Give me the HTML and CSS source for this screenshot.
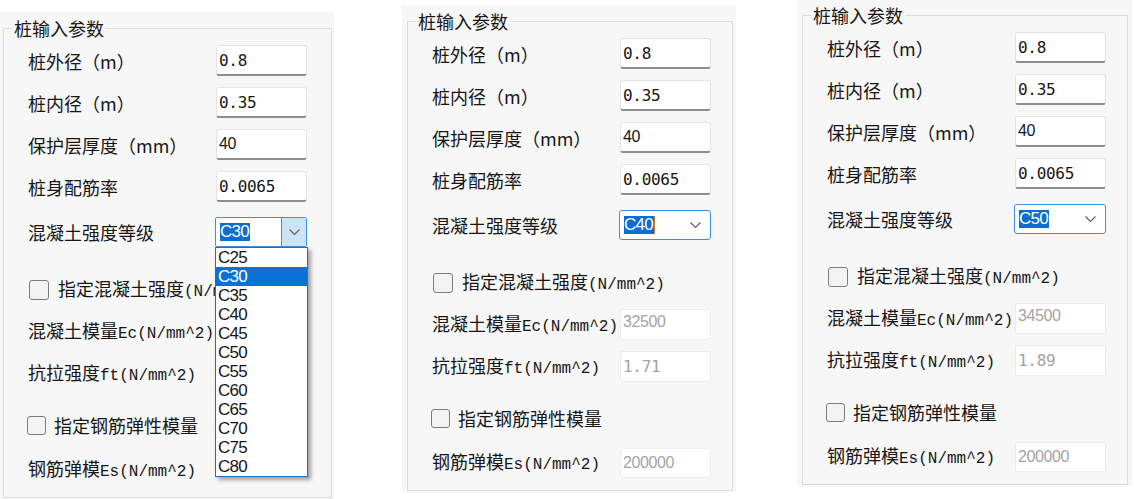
FILE: index.html
```html
<!DOCTYPE html>
<html lang="zh">
<head>
<meta charset="utf-8">
<title>桩输入参数</title>
<link rel="stylesheet" href="styles.css">
</head>
<body>
<div class="stage">

  <section class="panel panel-a">
    <fieldset class="group">
      <legend class="group-title">桩输入参数</legend>
      <div class="rows">
        <div class="row"><span class="lbl">桩外径（m）</span><span class="field"><span class="val">0.8</span></span></div>
        <div class="row"><span class="lbl">桩内径（m）</span><span class="field"><span class="val">0.35</span></span></div>
        <div class="row"><span class="lbl">保护层厚度（mm）</span><span class="field"><span class="val sans">40</span></span></div>
        <div class="row"><span class="lbl">桩身配筋率</span><span class="field"><span class="val">0.0065</span></span></div>
        <div class="row row-combo">
          <span class="lbl">混凝土强度等级</span>
          <div class="combo combo-open">
            <span class="combo-text"><span class="sel">C30</span></span>
            <span class="combo-btn"><svg class="chev" width="11" height="6" viewBox="0 0 11 6"><polyline points="0.5,0.5 5.5,5.5 10.5,0.5"/></svg></span>
            <ul class="dropdown">
              <li>C25</li><li class="hl">C30</li><li>C35</li><li>C40</li><li>C45</li><li>C50</li>
              <li>C55</li><li>C60</li><li>C65</li><li>C70</li><li>C75</li><li>C80</li>
            </ul>
          </div>
        </div>
        <div class="row row-check"><span class="check"></span><span class="clbl">指定混凝土强度<span class="en">(N/mm^2)</span></span></div>
        <div class="row row-ec"><span class="lbl">混凝土模量<span class="en">Ec(N/mm^2)</span></span><span class="field off covered"><span class="val sans dim">32500</span></span></div>
        <div class="row row-ft"><span class="lbl">抗拉强度<span class="en">ft(N/mm^2)</span></span><span class="field off covered"><span class="val dim">1.71</span></span></div>
        <div class="row row-check2"><span class="check"></span><span class="clbl">指定钢筋弹性模量</span></div>
        <div class="row row-es"><span class="lbl">钢筋弹模<span class="en">Es(N/mm^2)</span></span><span class="field off covered"><span class="val sans dim">200000</span></span></div>
      </div>
    </fieldset>
  </section>

  <section class="panel panel-b">
    <fieldset class="group">
      <legend class="group-title">桩输入参数</legend>
      <div class="rows">
        <div class="row"><span class="lbl">桩外径（m）</span><span class="field"><span class="val">0.8</span></span></div>
        <div class="row"><span class="lbl">桩内径（m）</span><span class="field"><span class="val">0.35</span></span></div>
        <div class="row"><span class="lbl">保护层厚度（mm）</span><span class="field"><span class="val sans">40</span></span></div>
        <div class="row"><span class="lbl">桩身配筋率</span><span class="field"><span class="val">0.0065</span></span></div>
        <div class="row row-combo">
          <span class="lbl">混凝土强度等级</span>
          <div class="combo">
            <span class="combo-text"><span class="sel caret">C40</span></span>
            <span class="combo-btn"><svg class="chev" width="11" height="6" viewBox="0 0 11 6"><polyline points="0.5,0.5 5.5,5.5 10.5,0.5"/></svg></span>
          </div>
        </div>
        <div class="row row-check"><span class="check"></span><span class="clbl">指定混凝土强度<span class="en">(N/mm^2)</span></span></div>
        <div class="row row-ec"><span class="lbl">混凝土模量<span class="en">Ec(N/mm^2)</span></span><span class="field off"><span class="val sans dim">32500</span></span></div>
        <div class="row row-ft"><span class="lbl">抗拉强度<span class="en">ft(N/mm^2)</span></span><span class="field off"><span class="val dim">1.71</span></span></div>
        <div class="row row-check2"><span class="check"></span><span class="clbl">指定钢筋弹性模量</span></div>
        <div class="row row-es"><span class="lbl">钢筋弹模<span class="en">Es(N/mm^2)</span></span><span class="field off"><span class="val sans dim">200000</span></span></div>
      </div>
    </fieldset>
  </section>

  <section class="panel panel-c">
    <fieldset class="group">
      <legend class="group-title">桩输入参数</legend>
      <div class="rows">
        <div class="row"><span class="lbl">桩外径（m）</span><span class="field"><span class="val">0.8</span></span></div>
        <div class="row"><span class="lbl">桩内径（m）</span><span class="field"><span class="val">0.35</span></span></div>
        <div class="row"><span class="lbl">保护层厚度（mm）</span><span class="field"><span class="val sans">40</span></span></div>
        <div class="row"><span class="lbl">桩身配筋率</span><span class="field"><span class="val">0.0065</span></span></div>
        <div class="row row-combo">
          <span class="lbl">混凝土强度等级</span>
          <div class="combo">
            <span class="combo-text"><span class="sel">C50</span></span>
            <span class="combo-btn"><svg class="chev" width="11" height="6" viewBox="0 0 11 6"><polyline points="0.5,0.5 5.5,5.5 10.5,0.5"/></svg></span>
          </div>
        </div>
        <div class="row row-check"><span class="check"></span><span class="clbl">指定混凝土强度<span class="en">(N/mm^2)</span></span></div>
        <div class="row row-ec"><span class="lbl">混凝土模量<span class="en">Ec(N/mm^2)</span></span><span class="field off"><span class="val sans dim">34500</span></span></div>
        <div class="row row-ft"><span class="lbl">抗拉强度<span class="en">ft(N/mm^2)</span></span><span class="field off"><span class="val dim">1.89</span></span></div>
        <div class="row row-check2"><span class="check"></span><span class="clbl">指定钢筋弹性模量</span></div>
        <div class="row row-es"><span class="lbl">钢筋弹模<span class="en">Es(N/mm^2)</span></span><span class="field off"><span class="val sans dim">200000</span></span></div>
      </div>
    </fieldset>
  </section>

</div>
</body>
</html>
```

FILE: styles.css
```css
* { box-sizing: border-box; }

html, body {
  margin: 0;
  background: #ffffff;
}

body {
  width: 1134px;
  height: 499px;
  overflow: hidden;
  font-family: "Noto Sans CJK SC", "Noto Sans", sans-serif;
  color: #161616;
}

.stage {
  display: flex;
  align-items: flex-start;
}

/* ---------- panels ---------- */
.panel {
  background: #f7f7f7;
  width: 334px;
  padding: 6px 2px 2px 3px;
  flex: none;
}

.panel-a { margin-top: 12px; }

.panel-b {
  margin-left: 68px;
  margin-top: 5px;
  padding-left: 5px;
  padding-right: 3px;
}

.panel-c {
  margin-left: 61px;
  width: 335px;
  padding-top: 5px;
  padding-left: 5px;
  padding-right: 4px;
}

.group {
  margin: 0;
  padding: 0;
  min-width: 0;
  border: 1px solid #dcdcdc;
}

.group-title {
  margin-left: 8px;
  padding: 0 2px;
  font-size: 18px;
  line-height: 20px;
  color: #161616;
}

.rows {
  display: flex;
  flex-direction: column;
  padding: 0 0 12px 24px;
}

/* ---------- rows ---------- */
.row {
  display: flex;
  align-items: center;
  height: 31px;
  margin-top: 11px;
}

.row:first-child { margin-top: 7px; }

.row-combo { margin-top: 15px; height: 30px; }
.row-check { margin-top: 33px; height: 20px; }
.row-ec { margin-top: 16px; }
.row-ft { margin-top: 11px; }
.row-check2 { margin-top: 26px; height: 20px; }
.row-es { margin-top: 20px; height: 30px; }

.lbl {
  width: 188px;
  flex: none;
  font-size: 18px;
  line-height: 24px;
  white-space: nowrap;
}

.en {
  font-family: "Liberation Mono", "DejaVu Sans Mono", monospace;
  font-size: 16px;
}

/* ---------- text fields ---------- */
.field {
  width: 91px;
  height: 31px;
  flex: none;
  display: flex;
  align-items: center;
  padding-left: 2px;
  background: #ffffff;
  border: 1px solid #e4e4e4;
  border-bottom: 2px solid #8e8e8e;
  border-radius: 3px;
}

.row-es .field { height: 30px; }

.field.off {
  border: 1px solid #ececec;
  border-radius: 2px;
}

/* fields hidden beneath the open dropdown list */
.field.covered { visibility: hidden; }

.val {
  font-family: "DejaVu Sans Mono", "Liberation Mono", monospace;
  font-size: 16px;
  letter-spacing: -0.3px;
  color: #161616;
  white-space: nowrap;
}

.val.sans {
  font-family: "Liberation Sans", "Noto Sans", sans-serif;
  font-size: 16px;
  letter-spacing: -0.4px;
}

.val.dim { color: #a4a4a4; }
.row-ec .val { margin-top: -6px; }

/* ---------- combo box ---------- */
.combo {
  position: relative;
  width: 92px;
  height: 30px;
  flex: none;
  display: flex;
  margin-left: -1px;
  background: #ffffff;
  border: 1px solid #3f8fe0;
  border-radius: 3px;
}

.combo-text {
  flex: 1;
  display: flex;
  align-items: center;
  padding-left: 4px;
  overflow: hidden;
}

.sel {
  background: #0a6fd1;
  color: #ffffff;
  font-family: "Liberation Sans", "Noto Sans", sans-serif;
  font-size: 17px;
  line-height: 18px;
  letter-spacing: -0.8px;
  padding: 0 1px 0 0;
}

.sel.caret { border-right: 1px solid #d07a2a; }

.combo-btn {
  width: 25px;
  flex: none;
  display: flex;
  align-items: center;
  justify-content: center;
  padding-right: 4px;
}

.combo-open { border-radius: 2px; }

.combo-open .combo-btn {
  padding-right: 0;
  background: #cde4f7;
  border-left: 1px solid #3f8fe0;
}

.chev polyline {
  fill: none;
  stroke: #5e5e5e;
  stroke-width: 1.1;
}

/* ---------- open dropdown list ---------- */
.dropdown {
  position: absolute;
  left: -1px;
  top: calc(100% + 1px);
  width: 93px;
  margin: 0;
  padding: 0;
  list-style: none;
  background: #ffffff;
  border: 1px solid #1f6fc6;
  box-shadow: 3px 3px 4px rgba(0, 0, 0, 0.35);
  z-index: 5;
}

.dropdown li {
  height: 19px;
  line-height: 19px;
  padding-left: 2px;
  font-family: "Liberation Sans", "Noto Sans", sans-serif;
  font-size: 17px;
  letter-spacing: -0.8px;
  color: #161616;
}

.dropdown li.hl {
  background: #0a72d4;
  color: #ffffff;
}

/* ---------- checkboxes ---------- */
.check {
  width: 20px;
  height: 20px;
  flex: none;
  margin-left: 1px;
  margin-right: 9px;
  background: #f3f3f3;
  border: 1px solid #7c7c7c;
  border-radius: 3px;
}

.row-check2 .check {
  width: 19px;
  height: 19px;
  margin-left: -1px;
  margin-right: 8px;
}

.clbl {
  font-size: 18px;
  line-height: 24px;
  white-space: nowrap;
}
```
